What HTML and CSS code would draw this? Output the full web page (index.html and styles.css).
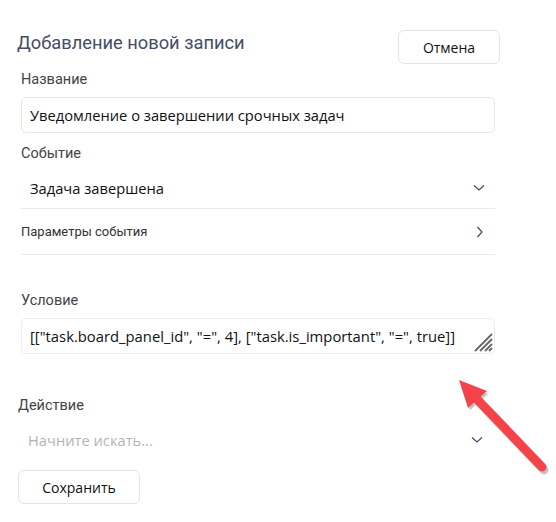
FILE: index.html
```html
<!DOCTYPE html>
<html lang="ru">
<head>
<meta charset="utf-8">
<link rel="stylesheet" href="styles.css">
</head>
<body>
<div class="page">
  <div class="header">
    <h1 class="title">Добавление новой записи</h1>
    <button class="btn btn-cancel">Отмена</button>
  </div>
  <div class="form">
    <div class="label label-name">Название</div>
    <div class="input">Уведомление о завершении срочных задач</div>
    <div class="label label-event">Событие</div>
    <div class="select-row">
      <span class="select-text">Задача завершена</span>
      <svg class="chev" width="12" height="8" viewBox="0 0 12 8"><path d="M1 1.5 L6 6 L11 1.5" fill="none" stroke="#3b4a6b" stroke-width="1.2"/></svg>
    </div>
    <div class="params-row">
      <span class="params-text">Параметры события</span>
      <svg class="chev-r" width="8" height="12" viewBox="0 0 8 12"><path d="M1.5 1 L6 6 L1.5 11" fill="none" stroke="#3b4a6b" stroke-width="1.2"/></svg>
    </div>
    <div class="label label-cond">Условие</div>
    <div class="textarea">
      <span>[["task.board_panel_id", "=", 4], ["task.is_important", "=", true]]</span>
      <svg class="resize" width="20" height="20" viewBox="0 0 20 20"><path d="M2 19 L19 2 M7 19 L19 7 M12 19 L19 12 M16 19 L19 16" stroke="#666" stroke-width="1.8" fill="none"/></svg>
    </div>
    <div class="action">
      <div class="label label-action">Действие</div>
      <div class="search-row">
        <span class="placeholder">Начните искать...</span>
        <svg class="chev" width="12" height="8" viewBox="0 0 12 8"><path d="M1 1.5 L6 6 L11 1.5" fill="none" stroke="#3b4a6b" stroke-width="1.2"/></svg>
      </div>
      <button class="btn btn-save">Сохранить</button>
    </div>
  </div>
  <svg class="arrow" width="556" height="522" viewBox="0 0 556 522">
    <g transform="translate(2,3)" opacity="0.35">
      <path d="M542 467 L474 396" stroke="#555" stroke-width="9" stroke-linecap="round"/>
      <path d="M460 381 L486 391 L468 407 Z" fill="#555"/>
    </g>
    <path d="M542 467 L474 396" stroke="#f4444a" stroke-width="9" stroke-linecap="round"/>
    <path d="M459 380 L487 391 L468 408 Z" fill="#f4444a"/>
  </svg>
</div>
</body>
</html>
```
FILE: styles.css
```css
* { box-sizing: border-box; }
html, body { margin: 0; padding: 0; background: #fff; }
body { font-family: Roboto, "Noto Sans", sans-serif; color: #222; }
.page { position: relative; width: 556px; height: 522px; overflow: hidden; padding: 30px 0 0 0; }
.header { display: flex; justify-content: space-between; align-items: flex-start; width: 500px; padding-left: 17px; }
.title { margin: 2px 0 0 0; font-size: 18.3px; font-weight: 400; color: #474b64; line-height: 22px; }
.btn { font-family: "Open Sans", sans-serif; font-size: 14px; color: #111; background: #fff; border: 1px solid #e4e4e6; border-radius: 6px; cursor: pointer; }
.btn-cancel { width: 102px; height: 34px; }
.form { padding-left: 21px; width: 495px; }
.label { font-size: 14.5px; color: #444; line-height: 18px; }
.label-name { margin-top: 7px; }
.input { margin-top: 8px; height: 36px; border: 1px solid #e8e8ea; border-radius: 5px; display: flex; align-items: center; padding-left: 8px; font-family: "Open Sans", sans-serif; font-size: 14.7px; color: #111; }
.label-event { margin-top: 12px; }
.select-row { display: flex; justify-content: space-between; align-items: center; height: 46px; border-bottom: 1px solid #e8e8f0; padding: 5px 10px 0 9px; font-family: "Open Sans", sans-serif; font-size: 14.7px; color: #111; }
.params-row { display: flex; justify-content: space-between; align-items: center; height: 46px; border-bottom: 1px solid #e8e8f0; padding: 0 11px 0 0; font-size: 13px; color: #333; }
.label-cond { margin-top: 37px; }
.textarea { position: relative; margin-top: 8px; height: 36px; border: 1px solid #ececee; border-radius: 5px; display: flex; align-items: center; padding-left: 8px; font-family: "Open Sans", sans-serif; font-size: 14.8px; color: #111; }
.resize { position: absolute; right: 1px; bottom: 1px; }
.action { margin-left: -3px; }
.label-action { margin-top: 43px; }
.search-row { display: flex; justify-content: space-between; align-items: center; height: 38px; margin-top: 6px; padding: 0 12px 0 10px; }
.placeholder { font-family: "Open Sans", sans-serif; font-size: 14.7px; color: #b4b4b8; }
.btn-save { margin-top: 11px; width: 122px; height: 34px; }
.arrow { position: absolute; left: 0; top: 0; pointer-events: none; }
```
